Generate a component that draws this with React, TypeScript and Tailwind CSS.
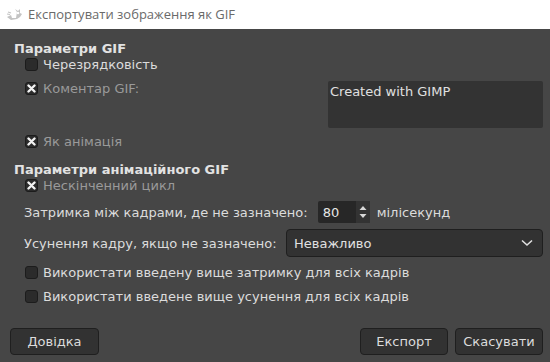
import * as React from "react";

function Check({ checked }: { checked?: boolean }) {
  return (
    <span className="flex h-[13px] w-[13px] shrink-0 items-center justify-center rounded-[3px] border border-[#1c1c1c] bg-[#2b2b2b]">
      {checked && (
        <svg width="9" height="9" viewBox="0 0 9 9">
          <path d="M1.5 1.5 L7.5 7.5 M7.5 1.5 L1.5 7.5" stroke="#f2f2f2" strokeWidth="2.4" strokeLinecap="round" />
        </svg>
      )}
    </span>
  );
}

function CheckRow({ label, checked, dim }: { label: string; checked?: boolean; dim?: boolean }) {
  return (
    <div className="flex items-center gap-[5px] pl-[25px]">
      <Check checked={checked} />
      <span className={dim ? "text-[#9a9a9a]" : "text-[#dcdcdc]"}>{label}</span>
    </div>
  );
}

function Btn({ label, w }: { label: string; w: string }) {
  return (
    <div className={`flex h-[27px] ${w} items-center justify-center rounded-[4px] border border-[#1f1f1f] bg-[#323232] text-[#dcdcdc]`}>
      {label}
    </div>
  );
}

export default function App() {
  return (
    <div
      className="flex h-[362px] w-[550px] flex-col overflow-hidden bg-[#464646] text-[13px] leading-none"
      style={{ fontFamily: '"DejaVu Sans", sans-serif' }}
    >
      {/* title bar */}
      <div className="flex h-[29px] shrink-0 items-center gap-[5px] bg-white pl-[6px]">
        <svg width="17" height="14" viewBox="0 0 17 14">
          <path d="M1 9 L5 7 L6 10 L10 10 L11 4 L9 1 L12 3 L14 1 L14 5 L16 6 L14 9 L11 11 L5 12 Z" fill="#c4c4c4" />
          <circle cx="12" cy="5" r="1.3" fill="#fff" />
          <path d="M2 4 L5 5 M1 6 L4 6.5" stroke="#c4c4c4" strokeWidth="1.2" />
        </svg>
        <span className="text-[13px] text-[#6a6a6a]" style={{ fontFamily: '"Open Sans", sans-serif' }}>
          Експортувати зображення як GIF
        </span>
      </div>

      <div className="flex flex-1 flex-col">
        <div className="pl-[14px] pt-[13px] font-bold text-[#e2e2e2]">Параметри GIF</div>

        <div className="mt-[3px]">
          <CheckRow label="Черезрядковість" />
        </div>

        <div className="mt-[10px] flex justify-between pr-[7px]">
          <div className="pt-[1px]">
            <CheckRow label="Коментар GIF:" checked dim />
          </div>
          <div className="h-[47px] w-[215px] rounded-[2px] bg-[#333333] pl-[2px] pt-[4px] text-[#e0e0e0]">
            Created with GIMP
          </div>
        </div>

        <div className="mt-[7px]">
          <CheckRow label="Як анімація" checked dim />
        </div>

        <div className="mt-[15px] pl-[14px] font-bold text-[#e2e2e2]">Параметри анімаційного GIF</div>

        <div className="mt-[3px]">
          <CheckRow label="Нескінченний цикл" checked dim />
        </div>

        <div className="mt-[9px] flex items-center pl-[24px] text-[#dcdcdc]">
          <span>Затримка між кадрами, де не зазначено:</span>
          <div className="ml-[10px] flex h-[22px] w-[52px] items-stretch rounded-[2px] bg-[#272727]">
            <span className="flex flex-1 items-center pl-[5px] text-[#e6e6e6]">80</span>
            <div className="flex w-[14px] flex-col items-center justify-center gap-[2px] bg-[#333333]">
              <svg width="8" height="6" viewBox="0 0 8 6"><path d="M0.5 5 L4 1 L7.5 5" fill="#d8d8d8" /></svg>
              <svg width="8" height="6" viewBox="0 0 8 6"><path d="M0.5 1 L4 5 L7.5 1" fill="#d8d8d8" /></svg>
            </div>
          </div>
          <span className="ml-[7px]">мілісекунд</span>
        </div>

        <div className="mt-[6px] flex items-center pl-[24px] pr-[7px] text-[#dcdcdc]">
          <span>Усунення кадру, якщо не зазначено:</span>
          <div className="ml-auto flex h-[28px] w-[257px] items-center justify-between rounded-[4px] border border-[#1f1f1f] bg-[#323232] pl-[7px] pr-[9px]">
            <span className="text-[#e0e0e0]">Неважливо</span>
            <svg width="12" height="8" viewBox="0 0 12 8">
              <path d="M1 1.5 L6 6 L11 1.5" fill="none" stroke="#e0e0e0" strokeWidth="1.6" />
            </svg>
          </div>
        </div>

        <div className="mt-[9px]">
          <CheckRow label="Використати введену вище затримку для всіх кадрів" />
        </div>
        <div className="mt-[11px]">
          <CheckRow label="Використати введене вище усунення для всіх кадрів" />
        </div>

        <div className="mt-auto flex items-center gap-[7px] pb-[7px] pl-[10px] pr-[7px]">
          <Btn label="Довідка" w="w-[89px]" />
          <div className="flex-1" />
          <Btn label="Експорт" w="w-[88px]" />
          <Btn label="Скасувати" w="w-[88px]" />
        </div>
      </div>
    </div>
  );
}
